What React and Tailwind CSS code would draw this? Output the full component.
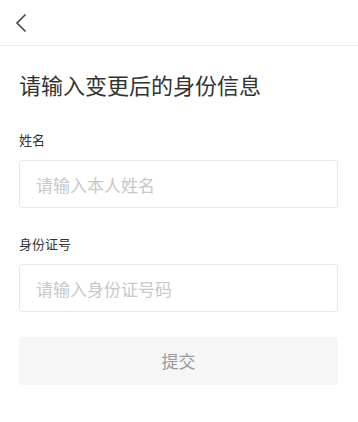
const font = { fontFamily: '"Noto Sans CJK SC", "Noto Sans", sans-serif' };

const Field = ({ label, placeholder }) => (
  <div>
    <div className="text-[13px] leading-[20px] text-[#333]">{label}</div>
    <input
      placeholder={placeholder}
      className="mt-[10px] block h-[48px] w-full rounded-[3px] border border-[#e8e8e8] bg-white px-[16px] text-[17px] text-[#333] outline-none placeholder:text-[#c8c8c8]"
    />
  </div>
);

export default function App() {
  return (
    <div className="min-h-screen bg-white" style={font}>
      <div className="flex h-[46px] items-center border-b border-[#ececec] pl-[15px]">
        <svg width="12" height="20" viewBox="0 0 12 20" fill="none">
          <polyline points="10.5,1.5 2,10 10.5,18.5" stroke="#444" strokeWidth="1.6" />
        </svg>
      </div>

      <div className="px-[19px] pr-[20px]">
        <h1 className="mt-[23px] text-[22px] leading-[30px] font-normal text-[#333]">
          请输入变更后的身份信息
        </h1>

        <div className="mt-[31px] flex flex-col gap-[26px]">
          <Field label="姓名" placeholder="请输入本人姓名" />
          <Field label="身份证号" placeholder="请输入身份证号码" />
        </div>

        <button className="mt-[25px] h-[48px] w-full rounded-[3px] bg-[#f6f6f6] text-[17px] text-[#9a9a9a]">
          提交
        </button>
      </div>
    </div>
  );
}
